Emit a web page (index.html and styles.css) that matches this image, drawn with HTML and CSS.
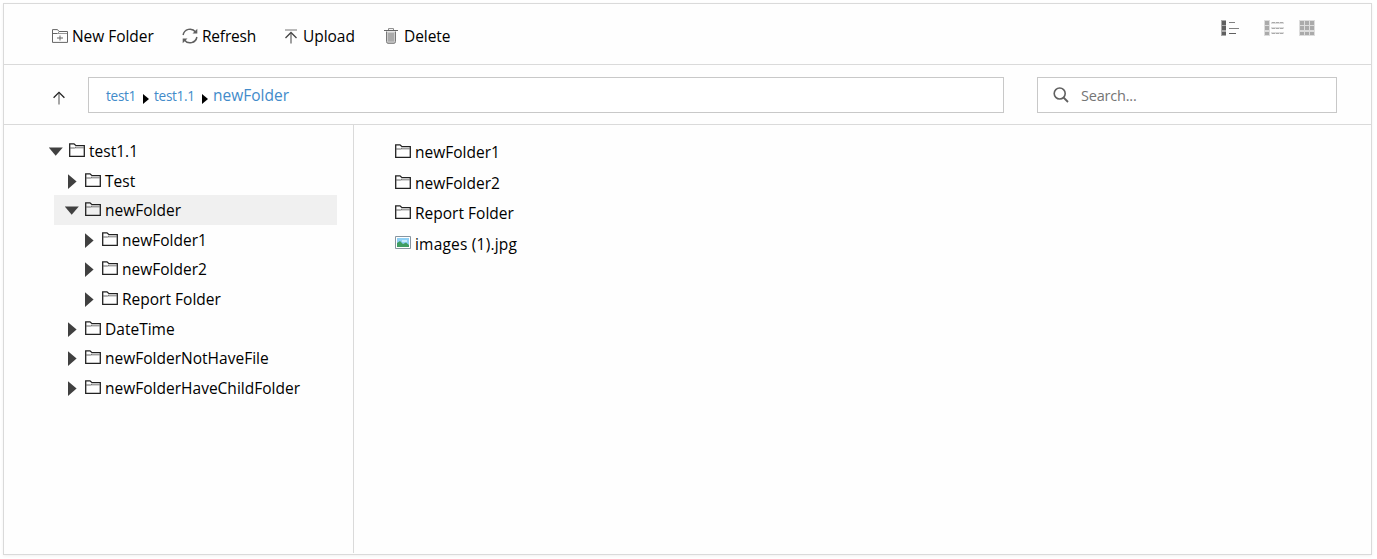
FILE: index.html
```html
<!DOCTYPE html>
<html lang="en">
<head>
<meta charset="utf-8">
<title>File Explorer</title>
<link rel="stylesheet" href="styles.css">
</head>
<body>
<svg class="defs" aria-hidden="true">
  <symbol id="folder" viewBox="0 0 16 14">
    <path d="M.7 13.3V.8H5L7 2.7H15.3V13.3Z" fill="none" stroke="#222" stroke-width="1.3"/>
    <path d="M1 5H5.5L7 4" fill="none" stroke="#666" stroke-width="1"/>
    <path d="M6 4.8H15" stroke="#777" stroke-width="1"/>
  </symbol>
  <symbol id="open" viewBox="0 0 20 16"><path d="M-.4 4.4H13.8L6.7 12.8Z" fill="#404040"/></symbol>
  <symbol id="closed" viewBox="0 0 20 16"><path d="M3 1.3V16L11.6 8.6Z" fill="#404040"/></symbol>
</svg>
<div class="explorer">
  <div class="toolbar">
    <div class="tool new">
      <svg width="16" height="14" viewBox="0 0 16 14"><path d="M.5 13.4V.6H5.5L7 2.5H15.5V13.4ZM.5 4.5H5.5L7 3.5" fill="none" stroke="#666"/><path d="M5 4.5H15" stroke="#999"/><path d="M5 9H11M8 6.5V11.5" stroke="#666"/></svg>
      <span class="label">New Folder</span>
    </div>
    <div class="tool refresh">
      <svg width="16" height="16" viewBox="0 0 16 16"><path d="M1.1 7A7 7 0 0 1 13.6 4M14.9 9A7 7 0 0 1 2.4 12" fill="none" stroke="#606060" stroke-width="1.5"/><path d="M15.3 .8V5.6H10.5ZM.7 15.2V10.4H5.5Z" fill="#606060"/></svg>
      <span class="label">Refresh</span>
    </div>
    <div class="tool upload">
      <svg width="14" height="15" viewBox="0 0 14 15"><path d="M1 1H13" stroke="#777"/><path d="M7 14.5V4" stroke="#777" stroke-width="1.4"/><path d="M1.5 9L7 3.5L12.5 9" fill="none" stroke="#444" stroke-width="1.3"/></svg>
      <span class="label">Upload</span>
    </div>
    <div class="tool delete">
      <svg width="14" height="16" viewBox="0 0 14 16"><path d="M2.5 3.5V13.5Q2.5 15.3 4 15.3H10Q11.5 15.3 11.5 13.5V3.5" fill="#ccc" stroke="#777"/><path d="M0 2.5H14" stroke="#666"/><path d="M4.5 2V.6H9.5V2" fill="none" stroke="#888"/><path d="M5 5V13.5M7 5V13.5M9 5V13.5" stroke="#888"/></svg>
      <span class="label">Delete</span>
    </div>
    <div class="views">
      <svg class="view list" width="18" height="16" viewBox="0 0 18 16" shape-rendering="crispEdges"><path d="M0 0H5V16H0Z" fill="#aaa"/><path d="M1 1H5V5H1ZM1 6H5V10H1ZM1 12H5V15H1Z" fill="#606060"/><path d="M8 2H14V3H8ZM8 8H18V9H8Z" fill="#808080"/><path d="M8 13H15V14H8Z" fill="#606060"/></svg>
      <svg class="view details" width="20" height="16" viewBox="0 0 20 16" shape-rendering="crispEdges"><path d="M0 0H6V16H0ZM7 2H20V4H7ZM7 7H20V9H7ZM7 12H20V14H7Z" fill="#ddd"/><path d="M1 1H5V5H1ZM1 6H5V10H1ZM1 12H5V15H1Z" fill="#aaa"/><path d="M8 2.5H19M8 8.5H19M8 13.5H19" stroke="#aaa" stroke-dasharray="3 1"/></svg>
      <svg class="view grid" width="16" height="16" viewBox="0 0 16 16" shape-rendering="crispEdges"><path d="M0 0H16V16H0Z" fill="#ddd"/><path d="M1 1H5V5H1ZM6 1H10V5H6ZM11 1H15V5H11ZM1 6H5V10H1ZM6 6H10V10H6ZM11 6H15V10H11ZM1 12H5V15H1ZM6 12H10V15H6ZM11 12H15V15H11Z" fill="#aaa"/></svg>
    </div>
  </div>
  <div class="address-row">
    <svg class="up" width="12" height="14" viewBox="0 0 12 14"><path d="M6 13.5V2" stroke="#777" stroke-width="1.3"/><path d="M.6 6.8L6 1.4L11.4 6.8" fill="none" stroke="#222" stroke-width="1.3"/></svg>
    <div class="address">
      <span class="crumb first">test1</span>
      <svg class="sep" width="6" height="10" viewBox="0 0 6 10"><path d="M0 0V10L6 5Z"/></svg>
      <span class="crumb second">test1.1</span>
      <svg class="sep" width="6" height="10" viewBox="0 0 6 10"><path d="M0 0V10L6 5Z"/></svg>
      <span class="crumb current">newFolder</span>
    </div>
    <div class="search">
      <svg width="16" height="16" viewBox="0 0 16 16"><circle cx="6.7" cy="6.5" r="5.5" fill="none" stroke="#606060" stroke-width="1.6"/><path d="M10.5 10.5L15 15" stroke="#606060" stroke-width="1.8"/></svg>
      <span class="placeholder">Search...</span>
    </div>
  </div>
  <div class="content">
    <div class="tree">
      <div class="node root"><svg class="twisty"><use href="#open"/></svg><svg class="folder"><use href="#folder"/></svg><span class="label">test1.1</span></div>
      <div class="node"><svg class="twisty"><use href="#closed"/></svg><svg class="folder"><use href="#folder"/></svg><span class="label">Test</span></div>
      <div class="node selected"><svg class="twisty"><use href="#open"/></svg><svg class="folder"><use href="#folder"/></svg><span class="label">newFolder</span></div>
      <div class="node deep"><svg class="twisty"><use href="#closed"/></svg><svg class="folder"><use href="#folder"/></svg><span class="label">newFolder1</span></div>
      <div class="node deep"><svg class="twisty"><use href="#closed"/></svg><svg class="folder"><use href="#folder"/></svg><span class="label">newFolder2</span></div>
      <div class="node deep"><svg class="twisty"><use href="#closed"/></svg><svg class="folder"><use href="#folder"/></svg><span class="label">Report Folder</span></div>
      <div class="node"><svg class="twisty"><use href="#closed"/></svg><svg class="folder"><use href="#folder"/></svg><span class="label">DateTime</span></div>
      <div class="node"><svg class="twisty"><use href="#closed"/></svg><svg class="folder"><use href="#folder"/></svg><span class="label">newFolderNotHaveFile</span></div>
      <div class="node"><svg class="twisty"><use href="#closed"/></svg><svg class="folder"><use href="#folder"/></svg><span class="label">newFolderHaveChildFolder</span></div>
    </div>
    <div class="files">
      <div class="file"><svg class="folder"><use href="#folder"/></svg><span class="label">newFolder1</span></div>
      <div class="file"><svg class="folder"><use href="#folder"/></svg><span class="label">newFolder2</span></div>
      <div class="file"><svg class="folder"><use href="#folder"/></svg><span class="label">Report Folder</span></div>
      <div class="file"><svg class="folder" viewBox="0 0 16 14"><path d="M.5 .5H15.5V12.5H.5Z" fill="#fff" stroke="#8795a0"/><path d="M2 2H14V11H2Z" fill="#8fd0f5"/><path d="M7 4H12V6H7Z" fill="#c8ebfc"/><path d="M2 11V7L5 5L8 8L11 6.5L14 9V11Z" fill="#3f9e63"/></svg><span class="label image-name">images (1).jpg</span></div>
    </div>
  </div>
</div>
</body>
</html>
```
FILE: styles.css
```css
* { box-sizing: border-box; }
body {
  margin: 0;
  padding: 3px 5px 4px 3px;
  height: 559px;
  overflow: hidden;
  background: #fff;
  color: #000;
  font: 16px/22px "Open Sans", "Noto Sans", sans-serif;
}
svg { display: block; flex: none; }
.defs { position: absolute; width: 0; height: 0; }
.explorer {
  height: 552px;
  display: flex;
  flex-direction: column;
  border: 1px solid #dadada;
  background: #fefefe;
  box-shadow: 0 1px 3px rgba(0, 0, 0, .06);
}
.label { white-space: nowrap; font-size: 15.5px; letter-spacing: .01px; }

.toolbar {
  height: 61px;
  padding-left: 48px;
  display: flex;
  align-items: flex-start;
  border-bottom: 1px solid #dadada;
}
.tool { display: flex; align-items: center; height: 22px; margin-top: 21px; gap: 4px; }
.tool .label { letter-spacing: -.05px; }
.new { width: 130px; }
.refresh { width: 102px; }
.refresh .label { letter-spacing: -.2px; }
.upload { width: 100px; gap: 5px; }
.delete { gap: 6px; }
.views { display: flex; margin: 16px 56px 0 auto; }
.details { margin-left: 25px; }
.grid { margin-left: 15px; }

.address-row {
  height: 60px;
  padding: 12px 34px 0 49px;
  display: flex;
  border-bottom: 1px solid #dadada;
}
.up { margin: 14px 23px 0 0; }
.address, .search {
  height: 36px;
  display: flex;
  align-items: center;
  border: 1px solid #c8c8c8;
  background: #fff;
}
.address { width: 916px; margin-right: 33px; padding-left: 17px; color: #428bca; }
.crumb { font-size: 13.6px; letter-spacing: -.3px; white-space: nowrap; }
.first { width: 37px; }
.second { width: 48px; }
.second, .current { margin-left: 5px; }
.first, .second { padding-top: 1px; }
.current { font-size: 15.5px; letter-spacing: 0; }
.sep { margin-top: 7px; }
.search { width: 300px; padding-left: 15px; gap: 12px; color: #757575; }
.placeholder { font-size: 14.5px; letter-spacing: -.2px; padding-top: 1px; }

.content { flex: 1; min-height: 0; display: flex; }
.tree { width: 350px; height: 428px; padding: 11.3px 16px 0 50px; border-right: 1px solid #dadada; }
.node { height: 29.6px; display: flex; align-items: center; padding-left: 11px; }
.root { padding-left: 0; margin-left: -5px; }
.deep { padding-left: 28px; }
.selected { background: #f0f0f0; }
.twisty { width: 20px; height: 16px; overflow: visible; }
.twisty use { overflow: visible; }
.folder { width: 16px; height: 14px; margin: -2px 4px 0 0; }
.files { padding: 12px 0 0 41px; }
.file { height: 30.6px; display: flex; align-items: center; }
.image-name { letter-spacing: .2px; }
```
